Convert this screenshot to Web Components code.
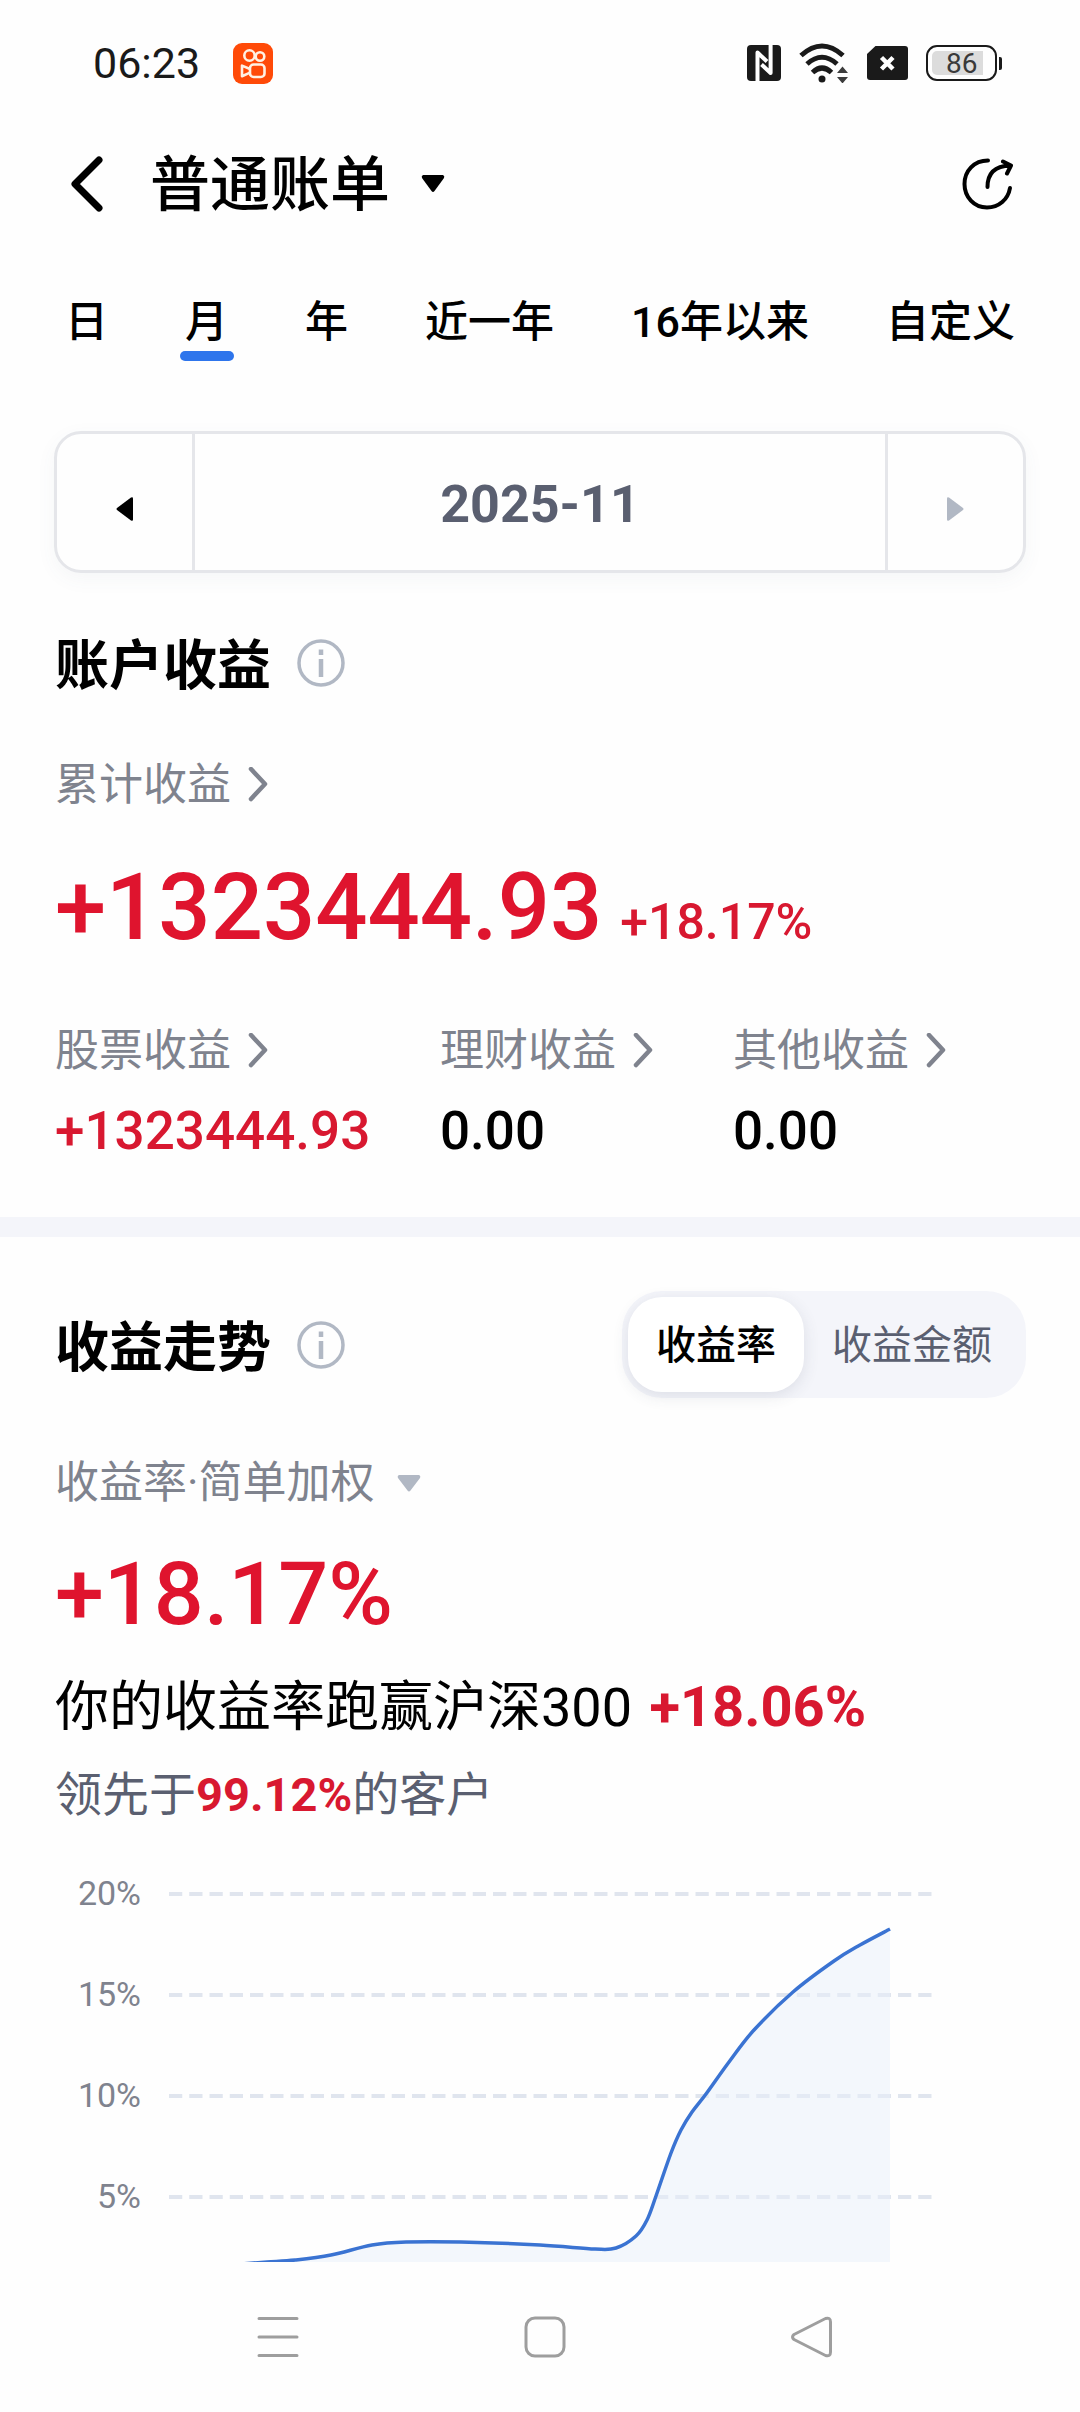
<!DOCTYPE html>
<html lang="zh-CN">
<head>
<meta charset="utf-8">
<meta name="viewport" content="width=device-width, initial-scale=1">
<title>普通账单</title>
<style>
  body {
    margin: 0;
    background-color: #fefefe;
    color: #000;
    font-family: Roboto, "Noto Sans CJK SC", sans-serif;
  }
</style>
</head>
<body>
<bill-page></bill-page>

<script>
// Device status bar: clock, running app, radios, battery
class StatusBar extends HTMLElement {
  constructor() {
    super();
    this.attachShadow({ mode: 'open' });
    this.shadowRoot.innerHTML = `
      <style>
        :host {
          display: flex;
          align-items: center;
          justify-content: space-between;
          min-height: 126px;
          padding: 0 78px 0 93px;
          color: #1a1a1a;
        }
        .side { display: flex; align-items: center; gap: 18px; }
        .clock { gap: 33px; }
        time { font-size: 43px; line-height: 50px; }
        svg { display: block; }
        .battery { display: flex; align-items: center; gap: 2px; }
        .cell {
          box-sizing: border-box;
          width: 71px;
          height: 36px;
          padding: 4px;
          border: 2px solid #1a1a1a;
          border-radius: 11px;
        }
        .level {
          width: 86%;
          height: 24px;
          border-radius: 5px 0 0 5px;
          background-color: #dcdcdc;
          color: #3a3a3a;
          font-size: 28px;
          line-height: 25px;
          text-indent: 14px;
        }
        .tip { width: 3px; height: 13px; border-radius: 0 2px 2px 0; background-color: #1a1a1a; }
      </style>
      <div class="side clock">
        <time>06:23</time>
        <svg width="40" height="41" viewBox="0 0 40 41" fill="none" stroke="#fff1e4" stroke-width="2.6" stroke-linejoin="round">
          <rect width="40" height="41" rx="9" fill="#ff4a08" stroke="none"/>
          <circle cx="16.500" cy="12.500" r="5.200"/>
          <circle cx="27" cy="13.500" r="4.300"/>
          <rect x="17" y="21.500" width="14.500" height="12.500" rx="3.600"/>
          <path d="M17 26 9 22.600v10.600l8-3.600"/>
        </svg>
      </div>
      <div class="side">
        <svg width="34" height="36" viewBox="0 0 34 36" fill="none" stroke="#fefefe" stroke-width="4" stroke-linejoin="round">
          <rect width="34" height="36" rx="4" fill="#1a1a1a" stroke="none"/>
          <path d="M10.500 37V7.500L20 16.500M23.600 -1V28L14.500 19.500"/>
        </svg>
        <svg width="50" height="40" viewBox="0 0 50 40" fill="none" stroke="#1a1a1a" stroke-width="5">
          <path d="M2 12.500Q23 -6.500 44 12.500"/>
          <path d="M8 21Q23 7.500 38 21"/>
          <path d="M13.500 29.500Q23 20.500 32.500 29.500"/>
          <circle cx="23" cy="36" r="3.500" fill="#1a1a1a" stroke="none"/>
          <path d="M38 30 43.500 23.500 49 30ZM38 34h11l-5.500 6.500Z" fill="#3c3c3c" stroke="none"/>
        </svg>
        <svg width="41" height="34" viewBox="0 0 41 34">
          <path d="M8.500 0H38Q41 0 41 3V31Q41 34 38 34H3Q0 34 0 31V8Z" fill="#1a1a1a"/>
          <path d="M14.500 11.500 26 23M26 11.500 14.500 23" stroke="#fff" stroke-width="4.500"/>
        </svg>
        <div class="battery">
          <div class="cell"><div class="level">86</div></div>
          <div class="tip"></div>
        </div>
      </div>
    `;
  }
}
customElements.define('status-bar', StatusBar);

// Title row with the bill type drop-down
class BillHeader extends HTMLElement {
  constructor() {
    super();
    this.attachShadow({ mode: 'open' });
    this.shadowRoot.innerHTML = `
      <style>
        :host {
          display: flex;
          align-items: center;
          min-height: 116px;
          padding: 0 67px 0 70px;
        }
        button {
          display: block;
          padding: 0;
          border: 0;
          background: none;
          color: inherit;
        }
        svg { display: block; }
        label {
          display: flex;
          align-items: center;
          gap: 31px;
          flex: 1;
          margin-left: 47px;
        }
        select {
          appearance: none;
          margin: 0;
          padding: 4px 0 0;
          border: 0;
          background: none;
          color: inherit;
          font-family: inherit;
          font-size: 60px;
          font-weight: 500;
          line-height: 80px;
        }
      </style>
      <button aria-label="返回">
        <svg width="33" height="58" viewBox="0 0 33 58" fill="none" stroke="#000" stroke-width="7" stroke-linecap="round" stroke-linejoin="round">
          <path d="M29 5 5 29l24 24"/>
        </svg>
      </button>
      <label>
        <select aria-label="账单类型"><option>普通账单</option></select>
        <svg width="24" height="18" viewBox="0 0 24 18"><path d="M2 0h20q2 1 1 3L13.500 16q-1.500 2-3 0L1 3Q0 1 2 0Z"/></svg>
      </label>
      <button aria-label="分享">
        <svg width="51" height="52" viewBox="0 0 51 52" fill="none" stroke="#000" stroke-width="4" stroke-linecap="round" stroke-linejoin="round">
          <path d="M26 2.500C12 2.500 2.500 13 2.500 26S12 49.500 25 49.500c12 0 21-8 23-19.500"/>
          <path d="M25.500 29c0-13 7-21 22.500-21.500M41 3.500l8 4-4 8"/>
        </svg>
      </button>
    `;
  }
}
customElements.define('bill-header', BillHeader);

class PeriodTabs extends HTMLElement {
  constructor() {
    super();
    this.attachShadow({ mode: 'open' });
    const tabs = ['日', '月', '年', '近一年', '16年以来', '自定义'];
    this.shadowRoot.innerHTML = `
      <style>
        :host { display: block; }
        nav {
          display: flex;
          justify-content: space-between;
          padding: 55px 65px 70px;
        }
        button {
          display: flex;
          flex-direction: column;
          align-items: center;
          gap: 4px;
          padding: 0;
          border: 0;
          background: none;
          color: inherit;
          font-family: inherit;
          font-size: 43px;
          font-weight: 500;
          line-height: 50px;
        }
        button:after {
          content: "";
          width: 54px;
          height: 10px;
          margin: 0 -6px;
          border-radius: 5px;
        }
        button[aria-selected="true"]:after { background-color: #2e75ec; }
      </style>
      <nav role="tablist">
        ${tabs.map((t) => `<button role="tab" aria-selected="${t === '月'}">${t}</button>`).join('')}
      </nav>
    `;
  }
}
customElements.define('period-tabs', PeriodTabs);

// Previous / current / next month
class MonthPicker extends HTMLElement {
  constructor() {
    super();
    this.attachShadow({ mode: 'open' });
    this.shadowRoot.innerHTML = `
      <style>
        :host {
          display: grid;
          grid-template-columns: 135px 1fr 135px;
          margin: 0 54px;
          border: 3px solid #e5e6ea;
          border-radius: 27px;
          box-shadow: 0 6px 20px rgba(80, 90, 110, 0.05);
        }
        button {
          display: flex;
          align-items: center;
          justify-content: center;
          height: 136px;
          padding: 0;
          border: 0;
          background: none;
          color: #5a5f70;
          font-family: inherit;
          font-size: 52px;
          font-weight: 700;
        }
        .month { padding-top: 4px; border: solid #e5e6ea; border-width: 0 3px; }
      </style>
      <button aria-label="上一月">
        <svg width="17" height="40" viewBox="0 0 17 40"><path d="M1 26 15 15.500q2-1 2 1v21q0 2-2 1L1 28q-1-1 0-2Z" fill="#000"/></svg>
      </button>
      <button class="month"><slot></slot></button>
      <button aria-label="下一月" disabled>
        <svg width="17" height="40" viewBox="0 0 17 40"><path d="M16 26 2 15.500q-2-1-2 1v21q0 2 2 1L16 28q1-1 0-2Z" fill="#b1b8c4"/></svg>
      </button>
    `;
  }
}
customElements.define('month-picker', MonthPicker);

class SectionTitle extends HTMLElement {
  constructor() {
    super();
    this.attachShadow({ mode: 'open' });
    this.shadowRoot.innerHTML = `
      <style>
        :host { display: flex; align-items: center; gap: 26px; }
        h2 { margin: 0; padding-top: 8px; font-size: 54px; font-weight: 700; line-height: 64px; }
        button { padding: 0; border: 0; background: none; }
        svg { display: block; }
      </style>
      <h2><slot></slot></h2>
      <button aria-label="说明">
        <svg width="48" height="48" viewBox="0 0 48 48" fill="none" stroke="#b1b8c4">
          <circle cx="24" cy="24" r="22" stroke-width="3.500"/>
          <path d="M24 10.500v5.500M24 20v18" stroke-width="4.500"/>
        </svg>
      </button>
    `;
  }
}
customElements.define('section-title', SectionTitle);

// Grey label that leads to a detail page
class DetailLink extends HTMLElement {
  constructor() {
    super();
    this.attachShadow({ mode: 'open' });
    this.shadowRoot.innerHTML = `
      <style>
        :host { display: block; }
        a {
          display: flex;
          align-items: center;
          gap: 17px;
          color: #7f838e;
          font-size: 44px;
          line-height: 56px;
          text-decoration: none;
        }
      </style>
      <a href="#">
        <slot></slot>
        <svg width="20" height="36" viewBox="0 0 20 36" fill="none" stroke="#7f838e" stroke-width="4.500" stroke-linecap="round" stroke-linejoin="round">
          <path d="M3 2 17 17 3 32"/>
        </svg>
      </a>
    `;
  }
}
customElements.define('detail-link', DetailLink);

class IncomeItem extends HTMLElement {
  constructor() {
    super();
    this.attachShadow({ mode: 'open' });
    this.shadowRoot.innerHTML = `
      <style>
        :host { display: flex; flex-direction: column; gap: 20px; }
        .value { font-size: 53px; font-weight: 500; line-height: 64px; }
        :host([up]) .value { color: #d81830; }
      </style>
      <detail-link>${this.getAttribute('label')}</detail-link>
      <div class="value"><slot></slot></div>
    `;
  }
}
customElements.define('income-item', IncomeItem);

class ModeSwitch extends HTMLElement {
  constructor() {
    super();
    this.attachShadow({ mode: 'open' });
    this.shadowRoot.innerHTML = `
      <style>
        :host {
          display: flex;
          padding: 6px;
          border-radius: 40px;
          background-color: #f4f5fa;
        }
        button {
          padding: 2px 28px 0;
          border: 0;
          border-radius: 34px;
          background: none;
          color: #5a5f70;
          font-family: inherit;
          font-size: 40px;
          line-height: 93px;
        }
        button[aria-pressed="true"] {
          background-color: #fff;
          color: #000;
          font-weight: 500;
          box-shadow: 0 4px 16px rgba(60, 65, 90, 0.12);
        }
      </style>
      <button aria-pressed="true">收益率</button>
      <button aria-pressed="false">收益金额</button>
    `;
  }
}
customElements.define('mode-switch', ModeSwitch);

class TrendChart extends HTMLElement {
  constructor() {
    super();
    this.attachShadow({ mode: 'open' });
    const labels = ['20%', '15%', '10%', '5%'];
    const points = [
      [72, 421], [98, 419], [126, 417], [162, 412], [203, 402], [237, 399], [292, 399], [371, 402],
      [426, 406], [447, 405], [467, 393], [478, 377], [487, 353], [502, 310], [512, 287], [523, 269], [537, 251],
      [560, 219], [585, 187], [624, 149], [665, 118], [691, 102], [721, 86]
    ];
    const line = this.curve(points);
    this.shadowRoot.innerHTML = `
      <style>
        :host {
          display: grid;
          grid-template-columns: 86px 1fr;
          gap: 28px;
          padding-right: 93px;
          overflow: hidden;
        }
        ol {
          margin: 0;
          padding: 0;
          list-style: none;
          color: #7f838e;
          font-size: 34px;
          line-height: 101px;
          text-align: right;
        }
        svg { display: block; width: 100%; height: 419px; }
      </style>
      <ol>${labels.map((l) => `<li>${l}</li>`).join('')}</ol>
      <svg viewBox="0 0 763 419" preserveAspectRatio="none" fill="none">
        ${labels.map((l, i) => `<path d="M0 ${51 + i * 101}H763" stroke="#e0e5ee" stroke-width="4" stroke-dasharray="13.250 7"/>`).join('')}
        <path d="${line}V419H72Z" fill="#e7f0fa" fill-opacity="0.5"/>
        <path d="${line}" stroke="#3a73d2" stroke-width="3.500"/>
      </svg>
    `;
  }

  // smooth line through all the points
  curve(p) {
    let d = `M${p[0]}`;
    for (let i = 0; i < p.length - 1; i++) {
      const a = p[i - 1] || p[i];
      const b = p[i];
      const c = p[i + 1];
      const e = p[i + 2] || c;
      d += `C${b[0] + (c[0] - a[0]) / 6} ${b[1] + (c[1] - a[1]) / 6} ${c[0] - (e[0] - b[0]) / 6} ${c[1] - (e[1] - b[1]) / 6} ${c[0]} ${c[1]}`;
    }
    return d;
  }
}
customElements.define('trend-chart', TrendChart);

class SystemNav extends HTMLElement {
  constructor() {
    super();
    this.attachShadow({ mode: 'open' });
    this.shadowRoot.innerHTML = `
      <style>
        :host {
          display: grid;
          grid-template-columns: repeat(3, 1fr);
          align-items: center;
          justify-items: center;
          min-height: 149px;
          padding: 0 135px 0 144px;
        }
        button { padding: 0; border: 0; background: none; }
        svg { display: block; fill: none; stroke: #9e9e9e; stroke-width: 3; stroke-linecap: round; stroke-linejoin: round; }
      </style>
      <button aria-label="最近任务"><svg width="42" height="42" viewBox="0 0 42 42"><path d="M2 2.500h38M2 21h38M2 39.500h38"/></svg></button>
      <button aria-label="主屏幕"><svg width="42" height="42" viewBox="0 0 42 42"><rect x="2" y="2" width="38" height="38" rx="9"/></svg></button>
      <button aria-label="返回"><svg width="42" height="42" viewBox="0 0 42 42"><path d="M3 18.500 34.500 2.500Q39.500 1 39.500 6V36Q39.500 41 34.500 39.500L3 23.500Q0 21 3 18.500Z"/></svg></button>
    `;
  }
}
customElements.define('system-nav', SystemNav);

class BillPage extends HTMLElement {
  constructor() {
    super();
    this.attachShadow({ mode: 'open' });
    this.shadowRoot.innerHTML = `
      <style>
        :host { display: block; }
        section { padding: 0 55px; }
        p { margin: 0; }
        .account { padding-top: 54px; padding-bottom: 54px; border-bottom: 20px solid #f4f5fa; }
        .account > detail-link { margin-top: 58px; }
        .total {
          margin-top: 45px;
          color: #df142e;
          font-size: 92px;
          font-weight: 500;
          line-height: 100px;
          white-space: nowrap;
        }
        .total small { margin-left: 18px; color: #d81830; font-size: 50px; line-height: 50px; }
        .items { display: grid; grid-template-columns: 385fr 293fr 292fr; margin-top: 65px; }
        .trend { padding-top: 54px; }
        .head { display: flex; align-items: center; justify-content: space-between; margin-right: -1px; }
        .method { display: flex; align-items: center; gap: 22px; margin-top: 57px; }
        select {
          appearance: none;
          margin: 0;
          padding: 0;
          border: 0;
          background: none;
          color: #7f838e;
          font-family: inherit;
          font-size: 44px;
          line-height: 56px;
        }
        .rate { margin-top: 33px; font-size: 88px; }
        .compare { margin-top: 31px; font-size: 54px; line-height: 64px; }
        .compare b { margin-left: 4px; font-size: 56px; }
        .rank { margin-top: 27px; color: #5a5f70; font-size: 47px; line-height: 56px; }
        b { color: #d81830; font-weight: 700; }
        trend-chart { margin-top: 20px; }
      </style>
      <status-bar></status-bar>
      <bill-header></bill-header>
      <period-tabs></period-tabs>
      <month-picker>2025-11</month-picker>
      <section class="account">
        <section-title>账户收益</section-title>
        <detail-link>累计收益</detail-link>
        <p class="total">+1323444.93<small>+18.17%</small></p>
        <div class="items">
          <income-item label="股票收益" up>+1323444.93</income-item>
          <income-item label="理财收益">0.00</income-item>
          <income-item label="其他收益">0.00</income-item>
        </div>
      </section>
      <section class="trend">
        <div class="head">
          <section-title>收益走势</section-title>
          <mode-switch></mode-switch>
        </div>
        <label class="method">
          <select aria-label="收益率算法"><option>收益率·简单加权</option></select>
          <svg width="24" height="17" viewBox="0 0 24 17"><path d="M2 0h20q2 1 1 3L13.500 15.500q-1.500 2-3 0L1 3Q0 1 2 0Z" fill="#b1b8c4"/></svg>
        </label>
        <p class="total rate">+18.17%</p>
        <p class="compare">你的收益率跑赢沪深300 <b>+18.06%</b></p>
        <p class="rank">领先于<b>99.12%</b>的客户</p>
        <trend-chart></trend-chart>
      </section>
      <system-nav></system-nav>
    `;
  }
}
customElements.define('bill-page', BillPage);
</script>
</body>
</html>
